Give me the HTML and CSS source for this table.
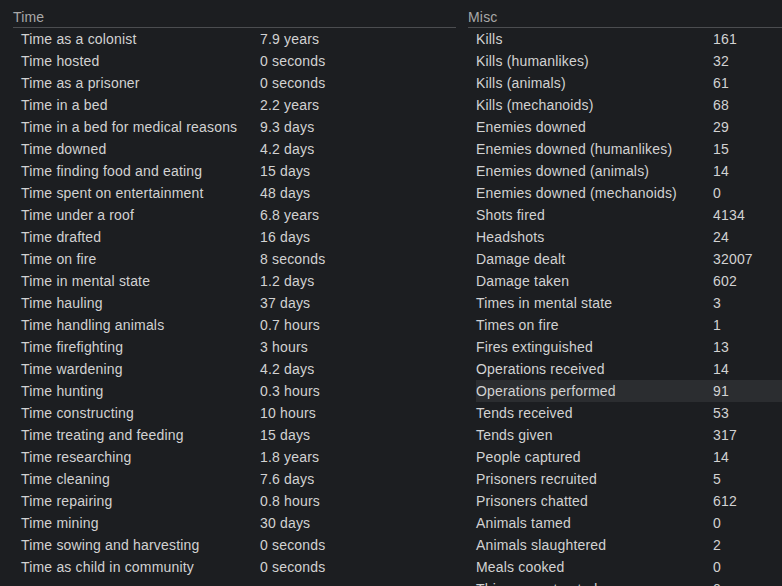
FILE: index.html
```html
<!DOCTYPE html>
<html>
<head>
<meta charset="utf-8">
<link rel="stylesheet" href="styles.css">
</head>
<body>
<div class="page">
  <section class="col">
    <div class="head">Time</div>
    <div class="rows">
      <div class="row"><span class="k">Time as a colonist</span><span>7.9 years</span></div>
      <div class="row"><span class="k">Time hosted</span><span>0 seconds</span></div>
      <div class="row"><span class="k">Time as a prisoner</span><span>0 seconds</span></div>
      <div class="row"><span class="k">Time in a bed</span><span>2.2 years</span></div>
      <div class="row"><span class="k">Time in a bed for medical reasons</span><span>9.3 days</span></div>
      <div class="row"><span class="k">Time downed</span><span>4.2 days</span></div>
      <div class="row"><span class="k">Time finding food and eating</span><span>15 days</span></div>
      <div class="row"><span class="k">Time spent on entertainment</span><span>48 days</span></div>
      <div class="row"><span class="k">Time under a roof</span><span>6.8 years</span></div>
      <div class="row"><span class="k">Time drafted</span><span>16 days</span></div>
      <div class="row"><span class="k">Time on fire</span><span>8 seconds</span></div>
      <div class="row"><span class="k">Time in mental state</span><span>1.2 days</span></div>
      <div class="row"><span class="k">Time hauling</span><span>37 days</span></div>
      <div class="row"><span class="k">Time handling animals</span><span>0.7 hours</span></div>
      <div class="row"><span class="k">Time firefighting</span><span>3 hours</span></div>
      <div class="row"><span class="k">Time wardening</span><span>4.2 days</span></div>
      <div class="row"><span class="k">Time hunting</span><span>0.3 hours</span></div>
      <div class="row"><span class="k">Time constructing</span><span>10 hours</span></div>
      <div class="row"><span class="k">Time treating and feeding</span><span>15 days</span></div>
      <div class="row"><span class="k">Time researching</span><span>1.8 years</span></div>
      <div class="row"><span class="k">Time cleaning</span><span>7.6 days</span></div>
      <div class="row"><span class="k">Time repairing</span><span>0.8 hours</span></div>
      <div class="row"><span class="k">Time mining</span><span>30 days</span></div>
      <div class="row"><span class="k">Time sowing and harvesting</span><span>0 seconds</span></div>
      <div class="row"><span class="k">Time as child in community</span><span>0 seconds</span></div>
    </div>
  </section>
  <section class="col col-right">
    <div class="head">Misc</div>
    <div class="rows">
      <div class="row"><span class="k">Kills</span><span>161</span></div>
      <div class="row"><span class="k">Kills (humanlikes)</span><span>32</span></div>
      <div class="row"><span class="k">Kills (animals)</span><span>61</span></div>
      <div class="row"><span class="k">Kills (mechanoids)</span><span>68</span></div>
      <div class="row"><span class="k">Enemies downed</span><span>29</span></div>
      <div class="row"><span class="k">Enemies downed (humanlikes)</span><span>15</span></div>
      <div class="row"><span class="k">Enemies downed (animals)</span><span>14</span></div>
      <div class="row"><span class="k">Enemies downed (mechanoids)</span><span>0</span></div>
      <div class="row"><span class="k">Shots fired</span><span>4134</span></div>
      <div class="row"><span class="k">Headshots</span><span>24</span></div>
      <div class="row"><span class="k">Damage dealt</span><span>32007</span></div>
      <div class="row"><span class="k">Damage taken</span><span>602</span></div>
      <div class="row"><span class="k">Times in mental state</span><span>3</span></div>
      <div class="row"><span class="k">Times on fire</span><span>1</span></div>
      <div class="row"><span class="k">Fires extinguished</span><span>13</span></div>
      <div class="row"><span class="k">Operations received</span><span>14</span></div>
      <div class="row hover"><span class="k">Operations performed</span><span>91</span></div>
      <div class="row"><span class="k">Tends received</span><span>53</span></div>
      <div class="row"><span class="k">Tends given</span><span>317</span></div>
      <div class="row"><span class="k">People captured</span><span>14</span></div>
      <div class="row"><span class="k">Prisoners recruited</span><span>5</span></div>
      <div class="row"><span class="k">Prisoners chatted</span><span>612</span></div>
      <div class="row"><span class="k">Animals tamed</span><span>0</span></div>
      <div class="row"><span class="k">Animals slaughtered</span><span>2</span></div>
      <div class="row"><span class="k">Meals cooked</span><span>0</span></div>
      <div class="row"><span class="k">Things constructed</span><span>0</span></div>
    </div>
  </section>
</div>
</body>
</html>
```
FILE: styles.css
```css
html, body {
  margin: 0;
  padding: 0;
  background: #1c1e21;
  overflow: hidden;
  width: 782px;
  height: 586px;
}
.page {
  display: flex;
  gap: 12px;
  padding-left: 13px;
  width: 782px;
  box-sizing: border-box;
  font-family: "Liberation Sans", Arial, sans-serif;
  font-size: 14px;
  letter-spacing: 0.18px;
  color: #d2d2d2;
}
.col {
  flex: none;
  width: 443px;
}
.col-right {
  flex: 1 1 auto;
  width: auto;
  min-width: 0;
}
.head {
  height: 20px;
  padding-top: 7px;
  line-height: 20px;
  color: #a8a8a8;
  border-bottom: 1px solid #4b4d50;
}
.rows {
  padding-left: 8px;
}
.row {
  display: flex;
  height: 22px;
  line-height: 22px;
  white-space: nowrap;
}
.k {
  flex: none;
  width: 239px;
}
.col-right .k {
  width: 237px;
}
.row.hover {
  background: #2b2d30;
}
```
